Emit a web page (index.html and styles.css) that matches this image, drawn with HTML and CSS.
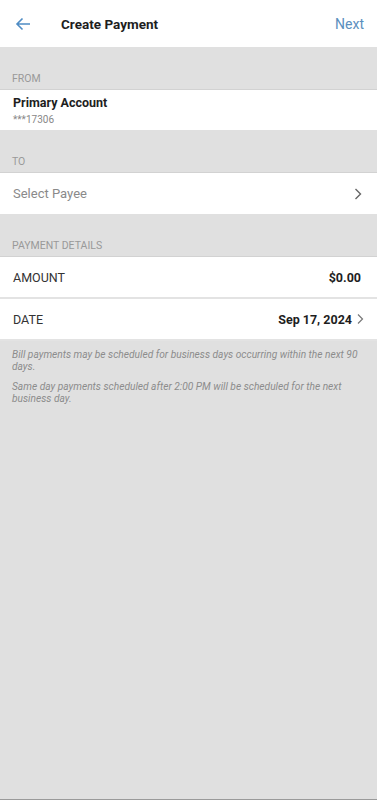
FILE: index.html
```html
<!DOCTYPE html>
<html lang="en">
<head>
  <meta charset="UTF-8" />
  <title>Create Payment</title>
  <link rel="stylesheet" href="styles.css">
</head>
<body>

<div class="screen">
  <div class="topbar">
    <svg class="back" width="16" height="14" viewBox="0 0 16 14">
      <path d="M15 7H2M7.5 1.5L2 7l5.5 5.5" fill="none" stroke="#4f8cc4" stroke-width="1.6"/>
    </svg>
    <div class="title">Create Payment</div>
    <div class="next">Next</div>
  </div>

  <div class="section-label">FROM</div>
  <div class="row account">
    <div class="acct-name">Primary Account</div>
    <div class="acct-num">***17306</div>
  </div>

  <div class="section-label">TO</div>
  <div class="row link">
    <span class="placeholder">Select Payee</span>
    <svg class="chev" width="8" height="12" viewBox="0 0 8 12">
      <path d="M1.5 1l5 5-5 5" fill="none" stroke="#666" stroke-width="1.4"/>
    </svg>
  </div>

  <div class="section-label">PAYMENT DETAILS</div>
  <div class="row field">
    <span class="key">AMOUNT</span>
    <span class="val">$0.00</span>
  </div>
  <div class="row field">
    <span class="key">DATE</span>
    <span class="val">Sep 17, 2024
      <svg class="chev small" width="7" height="12" viewBox="0 0 7 12">
        <path d="M1 1.5l4.5 4.5L1 10.5" fill="none" stroke="#777" stroke-width="1.2"/>
      </svg>
    </span>
  </div>

  <div class="notes">
    <p>Bill payments may be scheduled for business days occurring within the next 90 days.</p>
    <p>Same day payments scheduled after 2:00 PM will be scheduled for the next business day.</p>
  </div>
</div>

</body>
</html>
```

FILE: styles.css
```css
body {
  margin: 0;
  font-family: Roboto, "Liberation Sans", sans-serif;
  color: #222;
}
.screen {
  width: 377px;
  height: 799px;
  background: #e0e0e0;
  border-bottom: 1px solid #9a9a9a;
  display: flex;
  flex-direction: column;
}
.topbar {
  height: 47px;
  background: #fff;
  display: flex;
  align-items: center;
  padding: 0 13px 0 15px;
}
.back {
  margin-right: 30px;
}
.title {
  font-size: 13.5px;
  font-weight: bold;
  color: #1e1e1e;
  flex: 1;
}
.next {
  font-size: 14px;
  color: #5b8fbe;
}
.section-label {
  height: 43px;
  box-sizing: border-box;
  padding: 25px 12px 0;
  font-size: 10.5px;
  color: #999;
  border-bottom: 1px solid #d2d2d2;
}
.row {
  background: #fff;
  padding: 0 12px 0 13px;
}
.account {
  height: 40px;
  box-sizing: border-box;
  padding-top: 5px;
}
.acct-name {
  font-size: 12.5px;
  font-weight: bold;
  color: #1e1e1e;
}
.acct-num {
  font-size: 10px;
  color: #888;
  margin-top: 4px;
}
.link {
  height: 41px;
  display: flex;
  align-items: center;
  justify-content: space-between;
  padding-right: 15px;
}
.placeholder {
  font-size: 13px;
  color: #8a8a8a;
}
.field {
  height: 40px;
  display: flex;
  align-items: center;
  justify-content: space-between;
  padding-right: 16px;
  border-bottom: 2px solid #e3e3e3;
}
.field:last-of-type {
  border-bottom: none;
}
.key {
  font-size: 12.5px;
  color: #333;
}
.val {
  font-size: 12.5px;
  font-weight: bold;
  color: #1e1e1e;
  display: flex;
  align-items: center;
}
.chev.small {
  margin-left: 5px;
  margin-right: -3px;
}
.notes {
  padding: 8px 10px 0 12px;
}
.notes p {
  margin: 0 0 8px;
  font-size: 10.2px;
  font-style: italic;
  line-height: 12px;
  color: #8c8c8c;
}
```
